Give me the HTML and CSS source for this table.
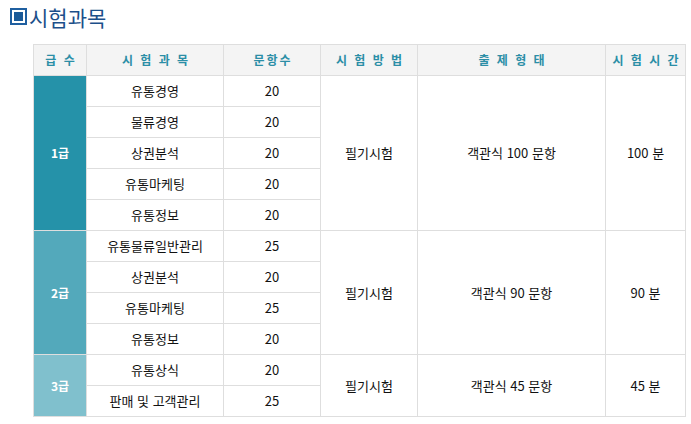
FILE: index.html
```html
<!DOCTYPE html>
<html lang="ko">
<head>
<meta charset="utf-8">
<link rel="stylesheet" href="styles.css">
</head>
<body>
<h2 class="title"><span class="ico"><span class="ico-in"></span></span>시험과목</h2>
<table class="exam">
  <colgroup>
    <col class="c1"><col class="c2"><col class="c3"><col class="c4"><col class="c5"><col class="c6">
  </colgroup>
  <thead>
    <tr><th>급 수</th><th>시 험 과 목</th><th>문항수</th><th>시 험 방 법</th><th>출 제 형 태</th><th>시 험 시 간</th></tr>
  </thead>
  <tbody>
    <tr><td rowspan="5" class="g g1">1급</td><td>유통경영</td><td>20</td><td rowspan="5">필기시험</td><td rowspan="5">객관식 100 문항</td><td rowspan="5">100 분</td></tr>
    <tr><td>물류경영</td><td>20</td></tr>
    <tr><td>상권분석</td><td>20</td></tr>
    <tr><td>유통마케팅</td><td>20</td></tr>
    <tr><td>유통정보</td><td>20</td></tr>
    <tr><td rowspan="4" class="g g2">2급</td><td>유통물류일반관리</td><td>25</td><td rowspan="4">필기시험</td><td rowspan="4">객관식 90 문항</td><td rowspan="4">90 분</td></tr>
    <tr><td>상권분석</td><td>20</td></tr>
    <tr><td>유통마케팅</td><td>25</td></tr>
    <tr><td>유통정보</td><td>20</td></tr>
    <tr><td rowspan="2" class="g g3">3급</td><td>유통상식</td><td>20</td><td rowspan="2">필기시험</td><td rowspan="2">객관식 45 문항</td><td rowspan="2">45 분</td></tr>
    <tr><td>판매 및 고객관리</td><td>25</td></tr>
  </tbody>
</table>
</body>
</html>
```
FILE: styles.css
```css
html, body { margin: 0; padding: 0; background: #fff; }
body { font-family: "Noto Sans CJK KR", "Noto Sans", sans-serif; color: #222; }
.title {
  margin: 0;
  padding: 4px 0 0 10px;
  height: 44px;
  box-sizing: border-box;
  display: flex;
  align-items: flex-start;
  font-size: 21px;
  font-weight: normal;
  color: #1c4f8a;
  line-height: 26px;
}
.ico {
  width: 17px; height: 17px;
  box-sizing: border-box;
  border: 2px solid #1f5fa0;
  display: inline-flex;
  align-items: center;
  justify-content: center;
  margin: 4px 2px 0 0;
}
.ico-in { width: 9px; height: 9px; background: #1a5a98; }
.exam {
  margin-left: 33px;
  width: 652px;
  border-collapse: collapse;
  table-layout: fixed;
  font-size: 13px;
}
.c1 { width: 53px; } .c2 { width: 137px; } .c3 { width: 97px; }
.c4 { width: 97px; } .c5 { width: 188px; } .c6 { width: 80px; }
.exam th, .exam td {
  border: 1px solid #dedede;
  text-align: center;
  padding: 0;
  height: 30px;
  line-height: 14px;
}
.exam th {
  background: #f4f4f4;
  color: #2b8ea6;
  font-weight: bold;
  font-size: 12px;
  letter-spacing: 2px;
  text-indent: 2px;
}
.exam td { color: #111; }
.g { color: #fff !important; font-weight: bold; font-size: 12px; }
.g1 { background: #2592a9; }
.g2 { background: #53a9bb; }
.g3 { background: #80c0cd; }
```
